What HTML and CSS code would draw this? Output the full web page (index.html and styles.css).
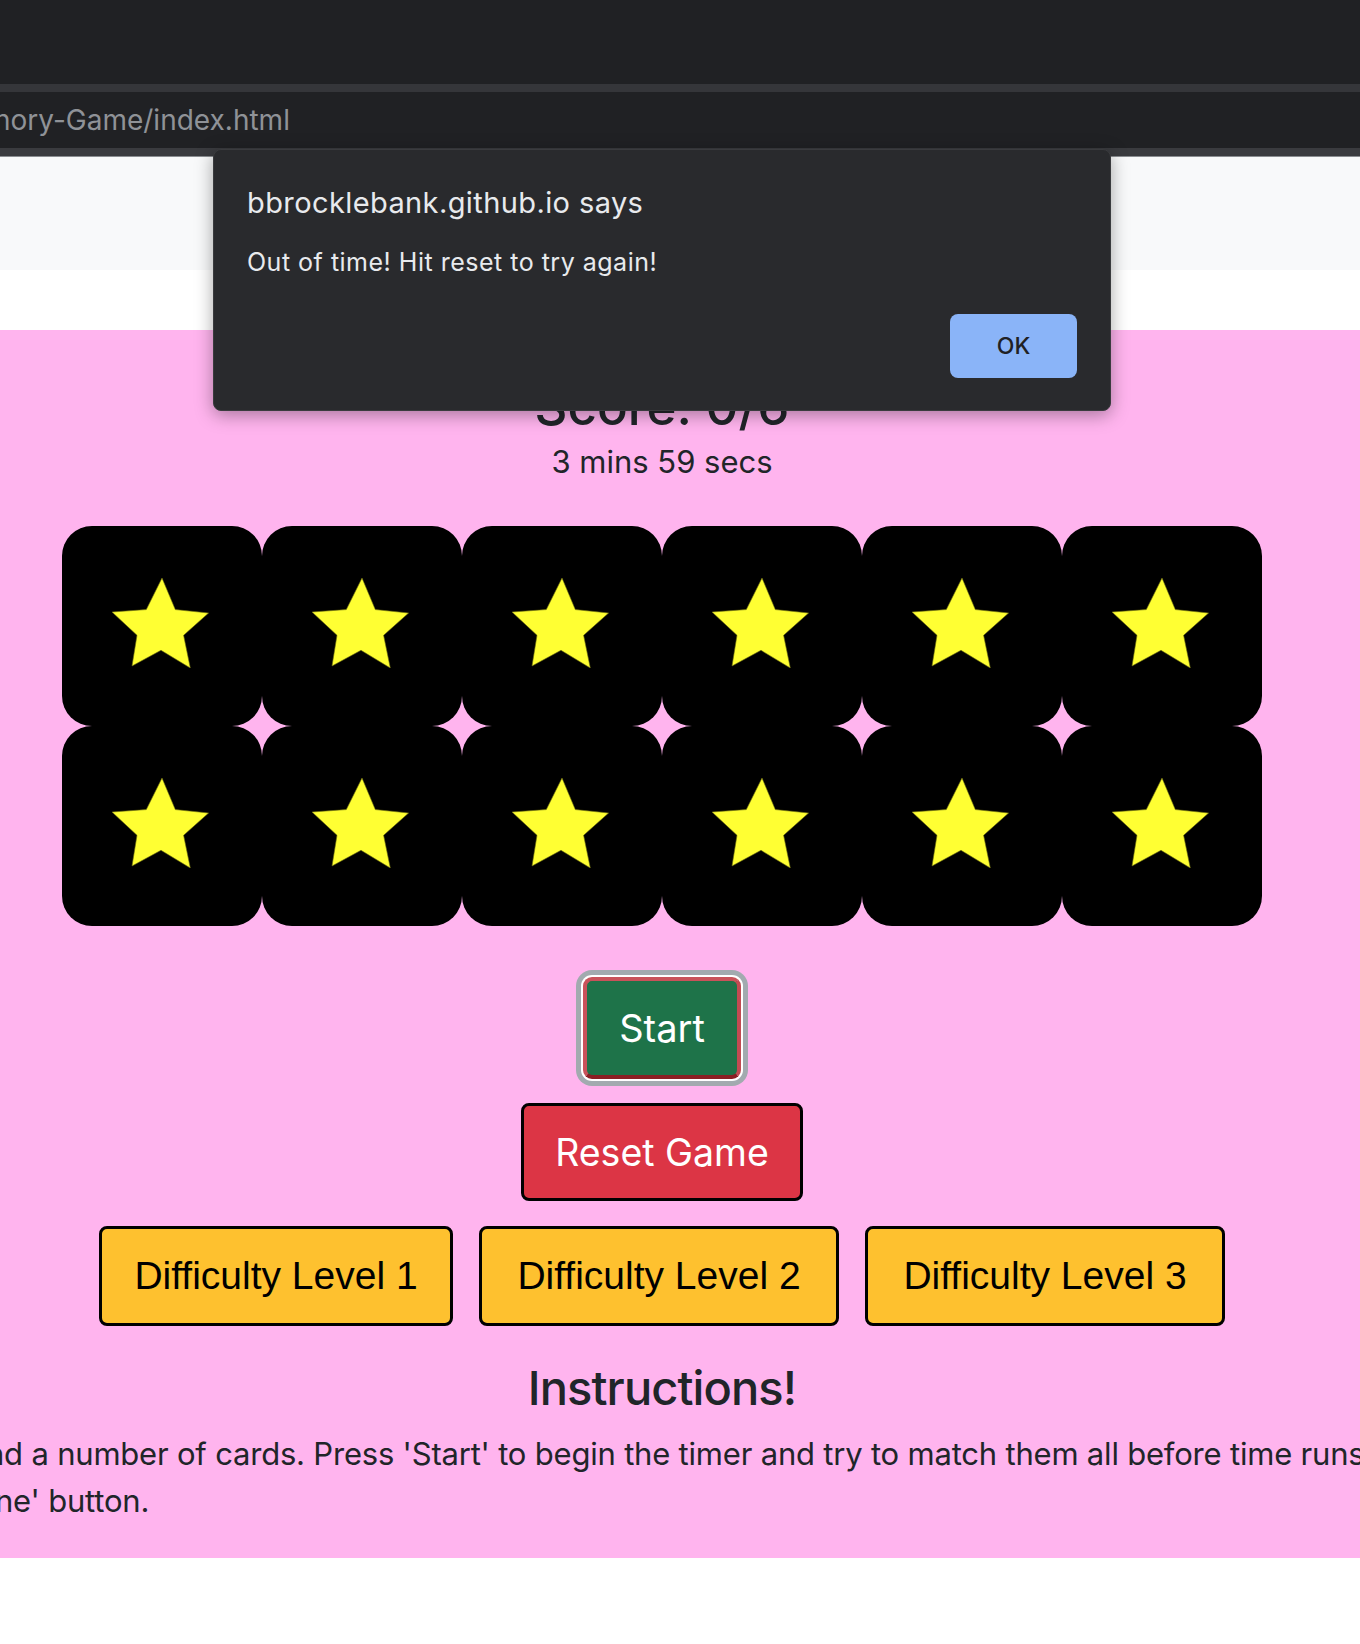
FILE: index.html
```html
<!DOCTYPE html>
<html lang="en">
<head>
<meta charset="utf-8">
<title>Memory Game</title>
<link rel="stylesheet" href="styles.css">
</head>
<body>
<div class="chrome">
  <div class="tabstrip"></div>
  <div class="chrome-line"></div>
  <div class="addressbar"><span class="url">nory-Game/index.html</span></div>
  <div class="chrome-line bottom"></div>
</div>
<nav class="navbar"></nav>
<div class="spacer"></div>
<main class="game">
  <div class="page">
    <h1 class="score">Score: 0/6</h1>
    <p class="timer">3 mins 59 secs</p>
    <div class="board">
      <div class="card"><svg class="star" viewBox="0 0 97 90"><polygon points="50,0 63.3,31.6 96.6,35 71.6,57.3 78.3,90 49,72.3 20,88 25,57.3 0,34 34.3,31.6"/></svg></div>
      <div class="card"><svg class="star" viewBox="0 0 97 90"><polygon points="50,0 63.3,31.6 96.6,35 71.6,57.3 78.3,90 49,72.3 20,88 25,57.3 0,34 34.3,31.6"/></svg></div>
      <div class="card"><svg class="star" viewBox="0 0 97 90"><polygon points="50,0 63.3,31.6 96.6,35 71.6,57.3 78.3,90 49,72.3 20,88 25,57.3 0,34 34.3,31.6"/></svg></div>
      <div class="card"><svg class="star" viewBox="0 0 97 90"><polygon points="50,0 63.3,31.6 96.6,35 71.6,57.3 78.3,90 49,72.3 20,88 25,57.3 0,34 34.3,31.6"/></svg></div>
      <div class="card"><svg class="star" viewBox="0 0 97 90"><polygon points="50,0 63.3,31.6 96.6,35 71.6,57.3 78.3,90 49,72.3 20,88 25,57.3 0,34 34.3,31.6"/></svg></div>
      <div class="card"><svg class="star" viewBox="0 0 97 90"><polygon points="50,0 63.3,31.6 96.6,35 71.6,57.3 78.3,90 49,72.3 20,88 25,57.3 0,34 34.3,31.6"/></svg></div>
      <div class="card"><svg class="star" viewBox="0 0 97 90"><polygon points="50,0 63.3,31.6 96.6,35 71.6,57.3 78.3,90 49,72.3 20,88 25,57.3 0,34 34.3,31.6"/></svg></div>
      <div class="card"><svg class="star" viewBox="0 0 97 90"><polygon points="50,0 63.3,31.6 96.6,35 71.6,57.3 78.3,90 49,72.3 20,88 25,57.3 0,34 34.3,31.6"/></svg></div>
      <div class="card"><svg class="star" viewBox="0 0 97 90"><polygon points="50,0 63.3,31.6 96.6,35 71.6,57.3 78.3,90 49,72.3 20,88 25,57.3 0,34 34.3,31.6"/></svg></div>
      <div class="card"><svg class="star" viewBox="0 0 97 90"><polygon points="50,0 63.3,31.6 96.6,35 71.6,57.3 78.3,90 49,72.3 20,88 25,57.3 0,34 34.3,31.6"/></svg></div>
      <div class="card"><svg class="star" viewBox="0 0 97 90"><polygon points="50,0 63.3,31.6 96.6,35 71.6,57.3 78.3,90 49,72.3 20,88 25,57.3 0,34 34.3,31.6"/></svg></div>
      <div class="card"><svg class="star" viewBox="0 0 97 90"><polygon points="50,0 63.3,31.6 96.6,35 71.6,57.3 78.3,90 49,72.3 20,88 25,57.3 0,34 34.3,31.6"/></svg></div>
    </div>
    <button class="btn btn-start" type="button">Start</button>
    <button class="btn btn-reset" type="button">Reset Game</button>
    <div class="levels">
      <button class="btn btn-level lvl-narrow" type="button">Difficulty Level 1</button>
      <button class="btn btn-level" type="button">Difficulty Level 2</button>
      <button class="btn btn-level" type="button">Difficulty Level 3</button>
    </div>
    <h2 class="instr-title">Instructions!</h2>
  </div>
  <p class="instr-text">nd a number of cards. Press 'Start' to begin the timer and try to match them all before time runs<br>ne' button.</p>
</main>
<div class="dialog">
  <div class="dialog-title">bbrocklebank.github.io says</div>
  <div class="dialog-msg">Out of time! Hit reset to try again!</div>
  <div class="dialog-actions"><button class="dialog-ok" type="button">OK</button></div>
</div>
</body>
</html>
```
FILE: styles.css
```css
html, body {
  margin: 0;
  padding: 0;
}
body {
  width: 1360px;
  height: 1644px;
  overflow: hidden;
  position: relative;
  background: #ffffff;
  font-family: Inter, "Noto Sans", sans-serif;
  color: #212529;
}
.chrome {
  background: #202124;
}
.tabstrip {
  height: 84px;
  background: #202124;
}
.chrome-line {
  height: 8px;
  background: #35363a;
}
.chrome-line.bottom {
  height: 9px;
  background: linear-gradient(#3a3b3f 0, #3a3b3f 8px, #8a8d91 8px);
}
.addressbar {
  height: 56px;
  background: #202124;
  display: flex;
  align-items: center;
  overflow: hidden;
}
.url {
  font-family: Inter, sans-serif;
  font-size: 28px;
  color: #8f9297;
  white-space: nowrap;
  margin-left: -6px;
  line-height: 1;
}
.navbar {
  height: 113px;
  background: #f8f9fa;
}
.spacer {
  height: 60px;
}
.game {
  background: #ffb4ee;
  height: 1228px;
  overflow: hidden;
}
.page {
  width: 1324px;
  display: flex;
  flex-direction: column;
  align-items: center;
  padding-top: 47px;
}
.score {
  margin: 0;
  font-size: 51px;
  line-height: 60px;
  font-weight: 500;
}
.timer {
  margin: 2px 0 0;
  font-size: 31px;
  line-height: 45px;
}
.board {
  margin-top: 42px;
  display: grid;
  grid-template-columns: repeat(6, 200px);
  grid-auto-rows: 200px;
}
.card {
  background: #000;
  border-radius: 30px;
  display: flex;
  align-items: center;
  justify-content: center;
}
.star {
  width: 97px;
  height: 90px;
  margin: -6px 4px 0 0;
}
.star polygon {
  fill: #ffff33;
  stroke: #6b6b10;
  stroke-width: 0.6;
}
.btn {
  font-family: Inter, sans-serif;
  cursor: pointer;
  display: flex;
  align-items: center;
  justify-content: center;
  padding: 0;
}
.btn-start {
  margin-top: 51px;
  width: 158px;
  height: 102px;
  background: #1e7349;
  color: #fff;
  font-size: 38px;
  border: 4px solid;
  border-color: #c9525a #c24a52 #8b1f24 #c9525a;
  border-radius: 9px;
  box-shadow: 0 0 0 2px #ffffff, 0 0 0 7px #a2aaaf;
}
.btn-reset {
  margin-top: 24px;
  width: 282px;
  height: 98px;
  background: #dc3545;
  color: #fff;
  font-size: 37.5px;
  border: 3px solid #000;
  border-radius: 8px;
}
.levels {
  margin-top: 25px;
  display: flex;
  gap: 26px;
}
.btn-level {
  height: 100px;
  width: 360px;
  background: #fec12f;
  color: #000;
  font-family: "Liberation Sans", Arial, sans-serif;
  font-size: 39px;
  border: 3px solid #000;
  border-radius: 8px;
}
.btn-level.lvl-narrow {
  width: 354px;
}
.instr-title {
  margin: 34px 0 0;
  font-size: 47px;
  font-weight: 500;
  line-height: 1.2;
  letter-spacing: -0.9px;
}
.instr-text {
  margin: 14px 0 0 -5px;
  text-indent: -9px;
  font-size: 31px;
  line-height: 47px;
  white-space: nowrap;
  letter-spacing: -0.2px;
}
.dialog {
  position: absolute;
  left: 213px;
  top: 149px;
  width: 898px;
  height: 262px;
  box-sizing: border-box;
  background: #292a2d;
  border: 1px solid #3a3b3e;
  border-radius: 8px;
  box-shadow: 0 4px 18px rgba(0, 0, 0, 0.35);
  padding: 36px 33px 32px;
  display: flex;
  flex-direction: column;
  font-family: Inter, "Noto Sans", sans-serif;
  color: #e8eaed;
}
.dialog-title {
  font-size: 29px;
  line-height: 34px;
  letter-spacing: 0.4px;
}
.dialog-msg {
  margin-top: 27px;
  font-size: 25px;
  line-height: 30px;
  letter-spacing: 0.5px;
}
.dialog-actions {
  margin-top: auto;
  display: flex;
  justify-content: flex-end;
}
.dialog-ok {
  width: 127px;
  height: 64px;
  background: #8ab4f8;
  color: #202124;
  border: none;
  border-radius: 8px;
  font-family: Inter, sans-serif;
  font-size: 23px;
  font-weight: 500;
  padding: 0;
}
```
